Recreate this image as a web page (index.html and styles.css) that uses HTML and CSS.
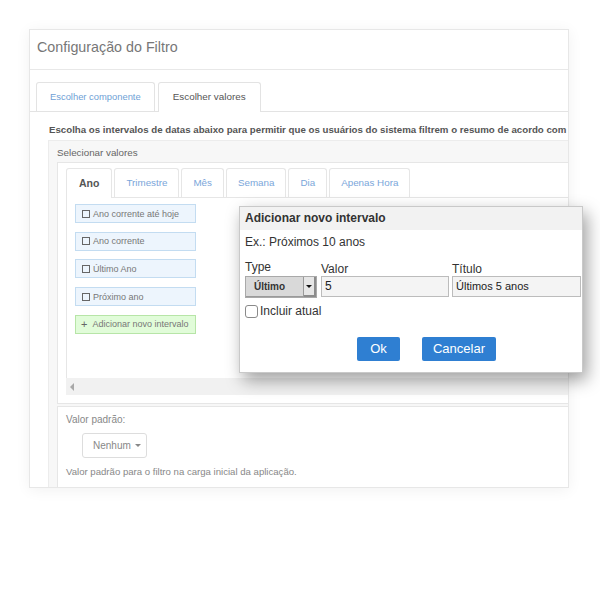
FILE: index.html
```html
<!DOCTYPE html>
<html lang="pt">
<head>
<meta charset="utf-8">
<title>Configuração do Filtro</title>
<link rel="stylesheet" href="styles.css">
</head>
<body>
<div class="panel">
  <div class="panel-head">Configuração do Filtro</div>
  <div class="tabs">
    <div class="tab">Escolher componente</div>
    <div class="tab active">Escolher valores</div>
  </div>
  <div class="tab-body">
    <div class="desc">Escolha os intervalos de datas abaixo para permitir que os usuários do sistema filtrem o resumo de acordo com cada intervalo selecionado.</div>
    <div class="group">
      <div class="group-label">Selecionar valores</div>
      <div class="box box-values">
        <div class="subtabs">
          <div class="subtab active">Ano</div>
          <div class="subtab">Trimestre</div>
          <div class="subtab">Mês</div>
          <div class="subtab">Semana</div>
          <div class="subtab">Dia</div>
          <div class="subtab">Apenas Hora</div>
        </div>
        <div class="pane">
          <div class="chip"><span class="cb"></span>Ano corrente até hoje</div>
          <div class="chip"><span class="cb"></span>Ano corrente</div>
          <div class="chip"><span class="cb"></span>Último Ano</div>
          <div class="chip"><span class="cb"></span>Próximo ano</div>
          <div class="chip chip-add"><span class="plus">+</span>Adicionar novo intervalo</div>
        </div>
        <div class="hscroll"><span class="arrow"></span></div>
      </div>
      <div class="box box-default">
        <div class="def-label">Valor padrão:</div>
        <div class="dd-btn">Nenhum <span class="caret"></span></div>
        <div class="def-help">Valor padrão para o filtro na carga inicial da aplicação.</div>
      </div>
    </div>
  </div>
</div>

<div class="dialog">
  <div class="dlg-head">Adicionar novo intervalo</div>
  <div class="dlg-body">
    <div class="dlg-ex">Ex.: Próximos 10 anos</div>
    <div class="dlg-grid">
      <div class="lbl lbl-type">Type</div>
      <div class="lbl">Valor</div>
      <div class="lbl">Título</div>
      <div class="select"><span class="sel-text">Último</span><span class="sel-btn"><span class="tri"></span></span></div>
      <div class="input">5</div>
      <div class="input input-sm">Últimos 5 anos</div>
    </div>
    <div class="dlg-check"><span class="check"></span>Incluir atual</div>
    <div class="dlg-actions">
      <div class="btn btn-ok">Ok</div>
      <div class="btn btn-cancel">Cancelar</div>
    </div>
  </div>
</div>
</body>
</html>
```
FILE: styles.css
```css
* { box-sizing: border-box; }
html, body { margin: 0; padding: 0; background: #fff; }
body {
  font-family: "Liberation Sans", Arial, sans-serif;
  width: 600px;
  height: 600px;
  overflow: hidden;
}

.panel {
  margin: 29px 0 0 29px;
  width: 540px;
  height: 459px;
  border: 1px solid #e7e7e7;
  overflow: hidden;
  box-shadow: 0 2px 14px rgba(0, 0, 0, 0.06);
  background: #fff;
}

.panel-head {
  height: 40px;
  padding: 0 7px;
  font-size: 14.3px;
  line-height: 34px;
  color: #777;
  border-bottom: 1px solid #e8e8e8;
}

.tabs {
  display: flex;
  gap: 3px;
  margin-top: 12px;
  padding-left: 6px;
  height: 30px;
  border-bottom: 1px solid #e3e3e3;
}
.tab {
  height: 29px;
  padding: 0 13px;
  border: 1px solid #e3e3e3;
  border-bottom: none;
  border-radius: 3px 3px 0 0;
  font-size: 9.4px;
  line-height: 28px;
  color: #6f9fd6;
}
.tab.active {
  height: 30px;
  padding: 0 14px;
  background: #fff;
  font-size: 9.9px;
  color: #555;
}

.tab-body {
  width: 620px;
  padding: 11px 0 0 18px;
}
.desc {
  padding-left: 1px;
  font-size: 9.7px;
  font-weight: bold;
  line-height: 13px;
  color: #555;
  white-space: nowrap;
}

.group {
  margin-top: 4px;
  background: #f7f7f7;
  border: 1px solid #ececec;
  padding: 0 0 0 8px;
}
.group-label {
  height: 21px;
  padding-top: 3px;
  font-size: 9.8px;
  line-height: 18px;
  color: #666;
}

.box {
  background: #fff;
  border: 1px solid #e6e6e6;
}
.box-values {
  padding: 5px 0 8px 8px;
}

.subtabs {
  display: flex;
  gap: 2px;
  height: 30px;
  border-bottom: 1px solid #e6e6e6;
}
.subtab {
  height: 29px;
  padding: 0 11px;
  border: 1px solid #e6e6e6;
  border-bottom: none;
  border-radius: 3px 3px 0 0;
  font-size: 9.8px;
  line-height: 28px;
  color: #7aa6da;
}
.subtab.active {
  height: 30px;
  padding: 0 12px;
  background: #fff;
  color: #555;
  font-size: 10.5px;
  font-weight: bold;
}

.pane {
  height: 180px;
  border-left: 1px solid #e6e6e6;
  padding: 6px 0 0 8px;
}
.chip {
  display: flex;
  align-items: center;
  width: 121px;
  height: 19px;
  margin-bottom: 8.7px;
  padding-left: 6px;
  background: #edf5fd;
  border: 1px solid #c3dcf1;
  font-size: 9px;
  color: #777;
  white-space: nowrap;
}
.cb {
  width: 8px;
  height: 8px;
  border: 1px solid #666;
  margin-right: 3px;
  flex: none;
}
.chip-add {
  background: #e1fcd9;
  border-color: #b7e5a7;
  padding-left: 5px;
}
.plus {
  font-size: 11px;
  color: #666;
  margin-right: 5px;
}

.hscroll {
  height: 17px;
  background: #f1f1f1;
  position: relative;
}
.arrow {
  position: absolute;
  left: 4px;
  top: 5px;
  width: 0;
  height: 0;
  border-top: 4px solid transparent;
  border-bottom: 4px solid transparent;
  border-right: 4px solid #a8a8a8;
}

.box-default {
  margin-top: 2px;
  height: 90px;
  padding: 6px 0 0 8px;
}
.def-label {
  font-size: 10px;
  line-height: 14px;
  color: #888;
}
.dd-btn {
  display: inline-flex;
  align-items: center;
  margin: 6px 0 0 16px;
  height: 25px;
  width: 65px;
  padding-left: 10px;
  border: 1px solid #ddd;
  border-radius: 3px;
  font-size: 10px;
  color: #888;
}
.caret {
  display: inline-block;
  margin-left: 4px;
  width: 0;
  height: 0;
  border-left: 3px solid transparent;
  border-right: 3px solid transparent;
  border-top: 3px solid #888;
}
.def-help {
  margin-top: 7px;
  font-size: 9.6px;
  line-height: 14px;
  color: #888;
}

/* dialog */
.dialog {
  position: absolute;
  left: 239px;
  top: 206px;
  width: 344px;
  height: 167px;
  background: #fff;
  border: 1px solid #c9c9c9;
  box-shadow: 4px 7px 16px rgba(0, 0, 0, 0.38);
  color: #333;
}
.dlg-head {
  height: 23px;
  background: #f2f2f2;
  padding-left: 5px;
  font-size: 12px;
  font-weight: bold;
  line-height: 23px;
  color: #333;
}
.dlg-body {
  padding: 0 2px 0 5px;
}
.dlg-ex {
  margin-top: 5px;
  font-size: 12px;
  line-height: 15px;
}
.dlg-grid {
  display: grid;
  grid-template-columns: 72px 128px 128px;
  column-gap: 4px;
  margin-top: 10px;
}
.dlg-grid > :nth-child(3n) { margin-left: -1px; }
.lbl {
  font-size: 12px;
  line-height: 14px;
  padding-top: 2px;
}
.lbl-type { padding-top: 0; }
.select {
  display: flex;
  height: 22px;
  border: 1px solid #a9a9a9;
  background: #d9d9d9;
  box-shadow: inset -1px -1px 0 #9a9a9a;
}
.sel-text {
  flex: 1;
  padding-left: 8px;
  font-size: 10px;
  font-weight: bold;
  line-height: 20px;
  color: #333;
}
.sel-btn {
  width: 13px;
  border-left: 1px solid #9a9a9a;
  background: #e6e6e6;
  box-shadow: inset -2px -2px 0 #8c8c8c;
  display: flex;
  align-items: center;
  justify-content: center;
}
.tri {
  width: 0;
  height: 0;
  margin: 0 2px 2px 0;
  border-left: 3px solid transparent;
  border-right: 3px solid transparent;
  border-top: 3px solid #111;
}
.input {
  height: 21px;
  background: #f4f4f4;
  border: 1px solid #bcbcbc;
  padding-left: 3px;
  font-size: 12px;
  line-height: 19px;
  color: #222;
}
.input-sm { font-size: 11px; }
.dlg-check {
  display: flex;
  align-items: flex-end;
  margin-top: 6px;
  font-size: 12px;
  line-height: 14px;
}
.check {
  width: 13px;
  height: 13px;
  border: 1px solid #8a8a8a;
  border-radius: 3px;
  background: #fff;
  margin-right: 2px;
}
.dlg-actions {
  display: flex;
  gap: 22px;
  margin-top: 19px;
  padding-left: 112px;
}
.btn {
  height: 24px;
  background: #2f7fd2;
  border-radius: 2px;
  color: #fff;
  font-size: 13px;
  line-height: 24px;
  text-align: center;
}
.btn-ok { width: 43px; }
.btn-cancel { width: 74px; }
```
